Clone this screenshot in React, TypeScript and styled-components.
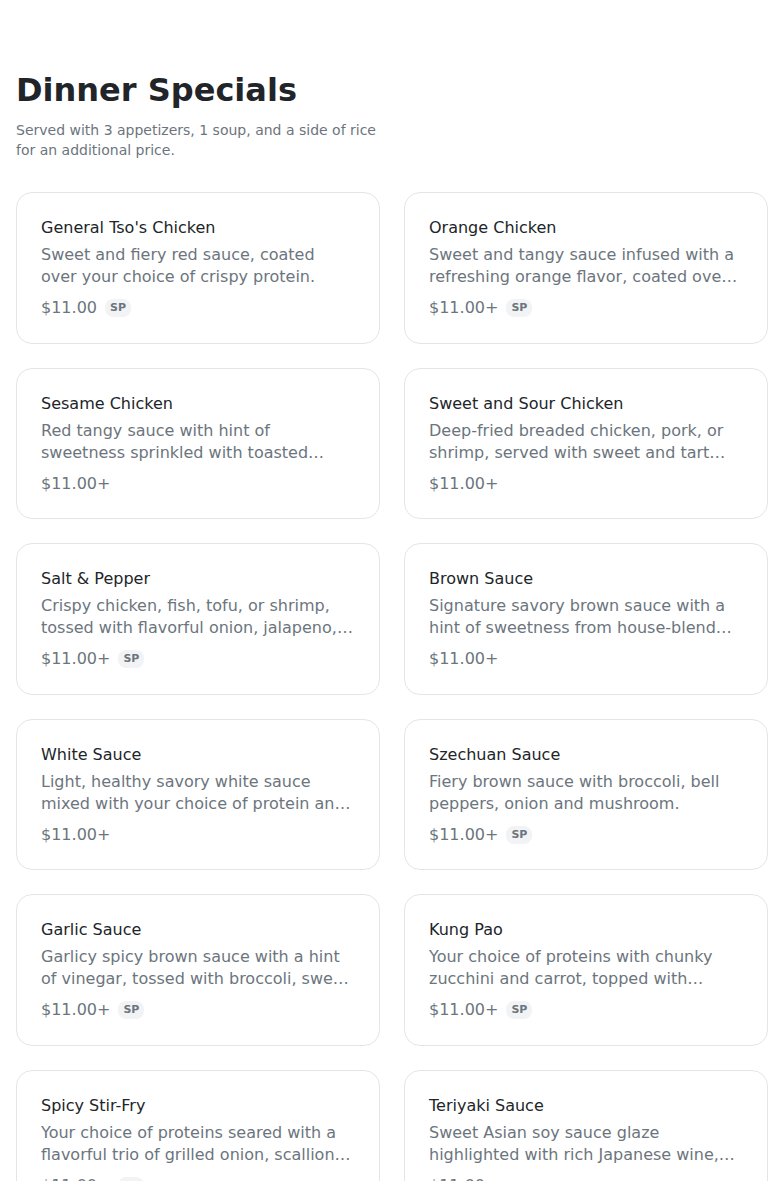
import React from "react";
import styled, { createGlobalStyle } from "styled-components";

const Global = createGlobalStyle`
  html, body { margin: 0; padding: 0; background: #ffffff; }
  body { font-family: "DejaVu Sans", "Noto Sans", sans-serif; }
  * { box-sizing: border-box; }
`;

const Page = styled.main`
  padding: 71px 16px 40px;
`;

const Header = styled.header`
  margin-bottom: 32px;
`;

const Title = styled.h1`
  margin: 0 0 11px;
  font-size: 32px;
  line-height: 38px;
  font-weight: 700;
  color: #212529;
`;

const Subtitle = styled.p`
  margin: 0;
  max-width: 364px;
  font-size: 14px;
  line-height: 20px;
  color: #6c757d;
`;

const Grid = styled.section`
  display: grid;
  grid-template-columns: 1fr 1fr;
  gap: 24px;
`;

const Card = styled.article`
  border: 1px solid #e3e5e8;
  border-radius: 16px;
  padding: 23px 24px 22.6px;
  display: flex;
  flex-direction: column;
  background: #fff;
`;

const Name = styled.h3`
  margin: 0 0 4px;
  font-size: 16px;
  line-height: 24px;
  font-weight: 400;
  color: #212529;
`;

const Desc = styled.p`
  margin: 0 0 8px;
  font-size: 16px;
  line-height: 22px;
  color: #6c757d;
  display: -webkit-box;
  -webkit-line-clamp: 2;
  -webkit-box-orient: vertical;
  overflow: hidden;
`;

const PriceRow = styled.div`
  display: flex;
  align-items: center;
  gap: 8px;
  height: 24px;
`;

const Price = styled.span`
  font-size: 16px;
  line-height: 24px;
  color: #6c757d;
`;

const Badge = styled.span`
  font-size: 11px;
  line-height: 14px;
  font-weight: 700;
  color: #6c757d;
  background: #f1f3f5;
  border-radius: 8px;
  padding: 2px 5px;
`;

type Item = { name: string; desc: string; price: string; sp?: boolean };

const items: Item[] = [
  { name: "General Tso's Chicken", desc: "Sweet and fiery red sauce, coated over your choice of crispy protein.", price: "$11.00", sp: true },
  { name: "Orange Chicken", desc: "Sweet and tangy sauce infused with a refreshing orange flavor, coated over your choice of crispy protein.", price: "$11.00+", sp: true },
  { name: "Sesame Chicken", desc: "Red tangy sauce with hint of sweetness sprinkled with toasted sesame seeds.", price: "$11.00+" },
  { name: "Sweet and Sour Chicken", desc: "Deep-fried breaded chicken, pork, or shrimp, served with sweet and tart sauce.", price: "$11.00+" },
  { name: "Salt & Pepper", desc: "Crispy chicken, fish, tofu, or shrimp, tossed with flavorful onion, jalapeno, and garlic.", price: "$11.00+", sp: true },
  { name: "Brown Sauce", desc: "Signature savory brown sauce with a hint of sweetness from house-blend seasoning.", price: "$11.00+" },
  { name: "White Sauce", desc: "Light, healthy savory white sauce mixed with your choice of protein and vegetables.", price: "$11.00+" },
  { name: "Szechuan Sauce", desc: "Fiery brown sauce with broccoli, bell peppers, onion and mushroom.", price: "$11.00+", sp: true },
  { name: "Garlic Sauce", desc: "Garlicy spicy brown sauce with a hint of vinegar, tossed with broccoli, sweet peppers and onion.", price: "$11.00+", sp: true },
  { name: "Kung Pao", desc: "Your choice of proteins with chunky zucchini and carrot, topped with peanuts.", price: "$11.00+", sp: true },
  { name: "Spicy Stir-Fry", desc: "Your choice of proteins seared with a flavorful trio of grilled onion, scallion and jalapeno.", price: "$11.00+", sp: true },
  { name: "Teriyaki Sauce", desc: "Sweet Asian soy sauce glaze highlighted with rich Japanese wine, served with broccoli.", price: "$11.00+" },
];

export default function App() {
  return (
    <>
      <Global />
      <Page>
        <Header>
          <Title>Dinner Specials</Title>
          <Subtitle>Served with 3 appetizers, 1 soup, and a side of rice for an additional price.</Subtitle>
        </Header>
        <Grid>
          {items.map((it) => (
            <Card key={it.name}>
              <Name>{it.name}</Name>
              <Desc>{it.desc}</Desc>
              <PriceRow>
                <Price>{it.price}</Price>
                {it.sp && <Badge>SP</Badge>}
              </PriceRow>
            </Card>
          ))}
        </Grid>
      </Page>
    </>
  );
}
